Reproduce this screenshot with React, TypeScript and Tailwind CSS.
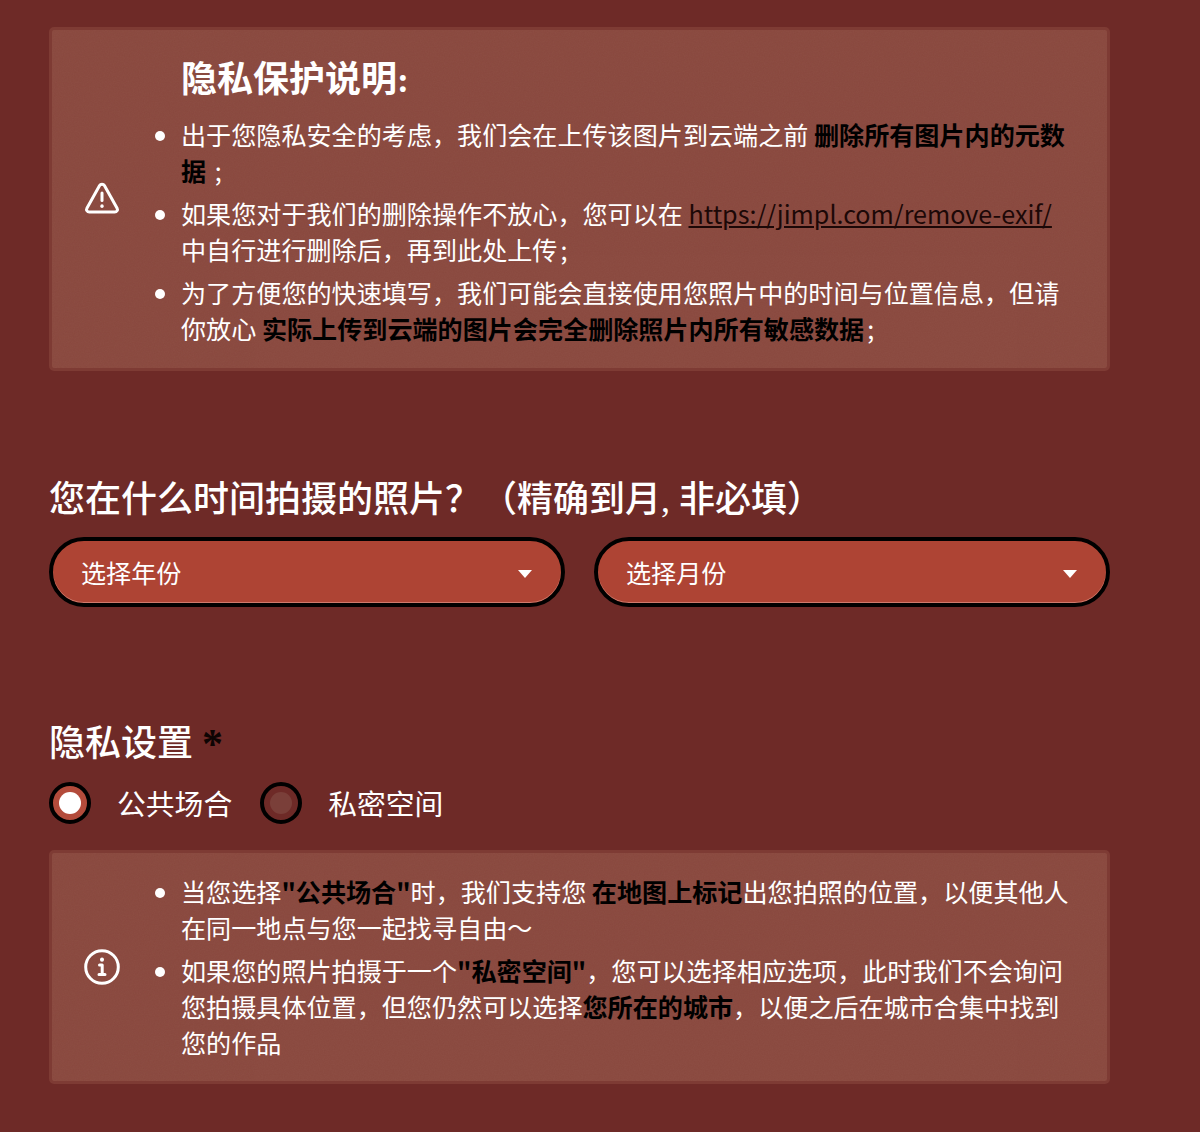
import React from 'react';

const sans = '[font-family:"Noto_Sans_CJK_SC","Noto_Sans",sans-serif]';
const serifHeading = '[font-family:"Liberation_Serif","Noto_Sans_CJK_SC",serif]';

const WarnIcon = () => (
  <svg width="36" height="36" viewBox="0 0 36 36" fill="none" stroke="white" strokeWidth="3" strokeLinecap="round" strokeLinejoin="round">
    <path d="M15.6 4.6 2.9 27.2c-1 1.8.3 3.9 2.4 3.9h25.4c2.1 0 3.4-2.1 2.4-3.9L20.4 4.6c-1-1.8-3.8-1.8-4.8 0Z" />
    <path d="M18 12v7.5" />
    <path d="M18 25v.2" strokeWidth="3.4" />
  </svg>
);

const InfoIcon = () => (
  <svg width="36" height="36" viewBox="0 0 36 36" fill="none" stroke="white" strokeWidth="3" strokeLinecap="round" strokeLinejoin="round">
    <circle cx="18" cy="18" r="16.3" />
    <path d="M18 10.5v.2" strokeWidth="4" />
    <path d="M15.5 16h2.7v9M15 25.5h6" strokeWidth="3" />
  </svg>
);

// paper grain that sits on the notice panels
const Grain: React.FC<{ id: string }> = ({ id }) => (
  <svg className="pointer-events-none absolute inset-0 h-full w-full opacity-[0.12]">
    <filter id={id}>
      <feTurbulence type="fractalNoise" baseFrequency="0.8" numOctaves="2" />
      <feColorMatrix values="0 0 0 0 0.42  0 0 0 0 0.2  0 0 0 0 0.16  1 0 0 0 0" />
    </filter>
    <rect width="100%" height="100%" filter={`url(#${id})`} />
  </svg>
);

const Notice: React.FC<{ id: string; icon: React.ReactNode; children: React.ReactNode; className?: string }> = ({ id, icon, children, className }) => (
  <div className={`relative flex items-center overflow-hidden rounded-[5px] border-[3px] border-[#7e3b34] bg-[#89483e] ${className ?? ''}`}>
    <Grain id={id} />
    <div className="relative flex w-[105px] shrink-0 justify-end">
      <span className="mr-[37px] flex">{icon}</span>
    </div>
    <div className="relative min-w-0 flex-1 pl-[24px] pr-[30px]">{children}</div>
  </div>
);

const Select: React.FC<{ label: string }> = ({ label }) => (
  <div className="flex h-[70px] flex-1 items-center justify-between rounded-full border-[4px] border-black bg-[#ae4434] pl-[28px] pr-[29px] pt-[2px] text-[25.1px] text-white shadow-[inset_0_-1px_0_#d07a6c]">
    <span>{label}</span>
    <span className="mt-[1px] h-0 w-0 border-x-[7px] border-t-[8px] border-x-transparent border-t-white" />
  </div>
);

const Radio: React.FC<{ label: string; checked?: boolean }> = ({ label, checked }) => (
  <div className="flex items-center gap-[26px]">
    <span className={`flex h-[42px] w-[42px] items-center justify-center rounded-full border-[4px] border-black ${checked ? 'bg-[#b34b3b]' : 'bg-[#6e2a27]'}`}>
      <span className={`h-[22px] w-[22px] rounded-full ${checked ? 'bg-white' : 'bg-[#7a3f39]'}`} />
    </span>
    <span className="text-[28.8px] leading-[42px] text-white">{label}</span>
  </div>
);

export default function App() {
  return (
    <div className={`h-[1132px] overflow-hidden bg-[#6e2a27] pl-[49px] pr-[90px] pt-[27px] ${sans}`}>
      <Notice id="grain-warn" icon={<WarnIcon />} className="h-[344px]">
        <h2 className={`mb-[14px] translate-y-[3px] text-[36px] font-bold leading-[50px] text-white ${serifHeading}`}>隐私保护说明:</h2>
        <ul className="list-disc space-y-[7px] text-[25.1px] leading-[36px] text-white">
          <li>
            出于您隐私安全的考虑，我们会在上传该图片到云端之前 <b className="text-black">删除所有图片内的元数据</b> <span className="ml-[3px]">;</span>
          </li>
          <li>
            如果您对于我们的删除操作不放心，您可以在 <a className="text-[#1c0807] underline">https://jimpl.com/remove-exif/</a> 中自行进行删除后，再到此处上传<span className="ml-[3px]">;</span>
          </li>
          <li>
            为了方便您的快速填写，我们可能会直接使用您照片中的时间与位置信息，但请你放心 <b className="text-black">实际上传到云端的图片会完全删除照片内所有敏感数据</b><span className="ml-[3px]">;</span>
          </li>
        </ul>
      </Notice>

      <h3 className={`mt-[104px] text-[36px] font-medium leading-[50px] text-white ${serifHeading}`}>您在什么时间拍摄的照片？（精确到月, 非必填）</h3>
      <div className="mt-[12px] flex gap-[29px]">
        <Select label="选择年份" />
        <Select label="选择月份" />
      </div>

      <h3 className={`mt-[112px] h-[50px] text-[36px] font-medium leading-[50px] text-white ${serifHeading}`}>
        隐私设置 <span className="align-[-2px] text-[42px] font-bold leading-none text-[#0e0403]">*</span>
      </h3>
      <div className="mt-[13px] flex gap-[28px]">
        <Radio label="公共场合" checked />
        <Radio label="私密空间" />
      </div>

      <Notice id="grain-info" icon={<InfoIcon />} className="mt-[26px] h-[234px]">
        <ul className="list-disc space-y-[7px] pb-[2px] text-[25.1px] leading-[36px] text-white">
          <li>
            当您选择<b className="text-black">"公共场合"</b>时，我们支持您 <b className="text-black">在地图上标记</b>出您拍照的位置，以便其他人在同一地点与您一起找寻自由～
          </li>
          <li>
            如果您的照片拍摄于一个<b className="text-black">"私密空间"</b>，您可以选择相应选项，此时我们不会询问您拍摄具体位置，但您仍然可以选择<b className="text-black">您所在的城市</b>，以便之后在城市合集中找到您的作品
          </li>
        </ul>
      </Notice>
    </div>
  );
}
